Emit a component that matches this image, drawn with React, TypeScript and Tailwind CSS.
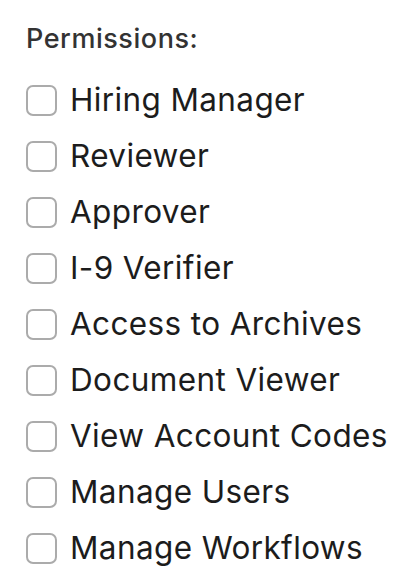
const permissions = [
  'Hiring Manager',
  'Reviewer',
  'Approver',
  'I-9 Verifier',
  'Access to Archives',
  'Document Viewer',
  'View Account Codes',
  'Manage Users',
  'Manage Workflows',
]

export default function App() {
  return (
    <div className="min-h-screen bg-white pl-[26px] pt-[25px]" style={{ fontFamily: 'Inter, "Noto Sans", sans-serif' }}>
      <div className="text-[27px] font-medium leading-[28px] tracking-[0.02em] text-[#333333]">Permissions:</div>
      <div className="mt-[19px] flex flex-col">
        {permissions.map((p) => (
          <label key={p} className="flex h-[56px] items-center gap-[13px]">
            <span className="h-[31px] w-[31px] shrink-0 rounded-[7px] border-2 border-[#ababab] bg-white" />
            <span className="text-[31.5px] leading-none tracking-[0.012em] text-[#1c1c1c]">{p}</span>
          </label>
        ))}
      </div>
    </div>
  )
}
